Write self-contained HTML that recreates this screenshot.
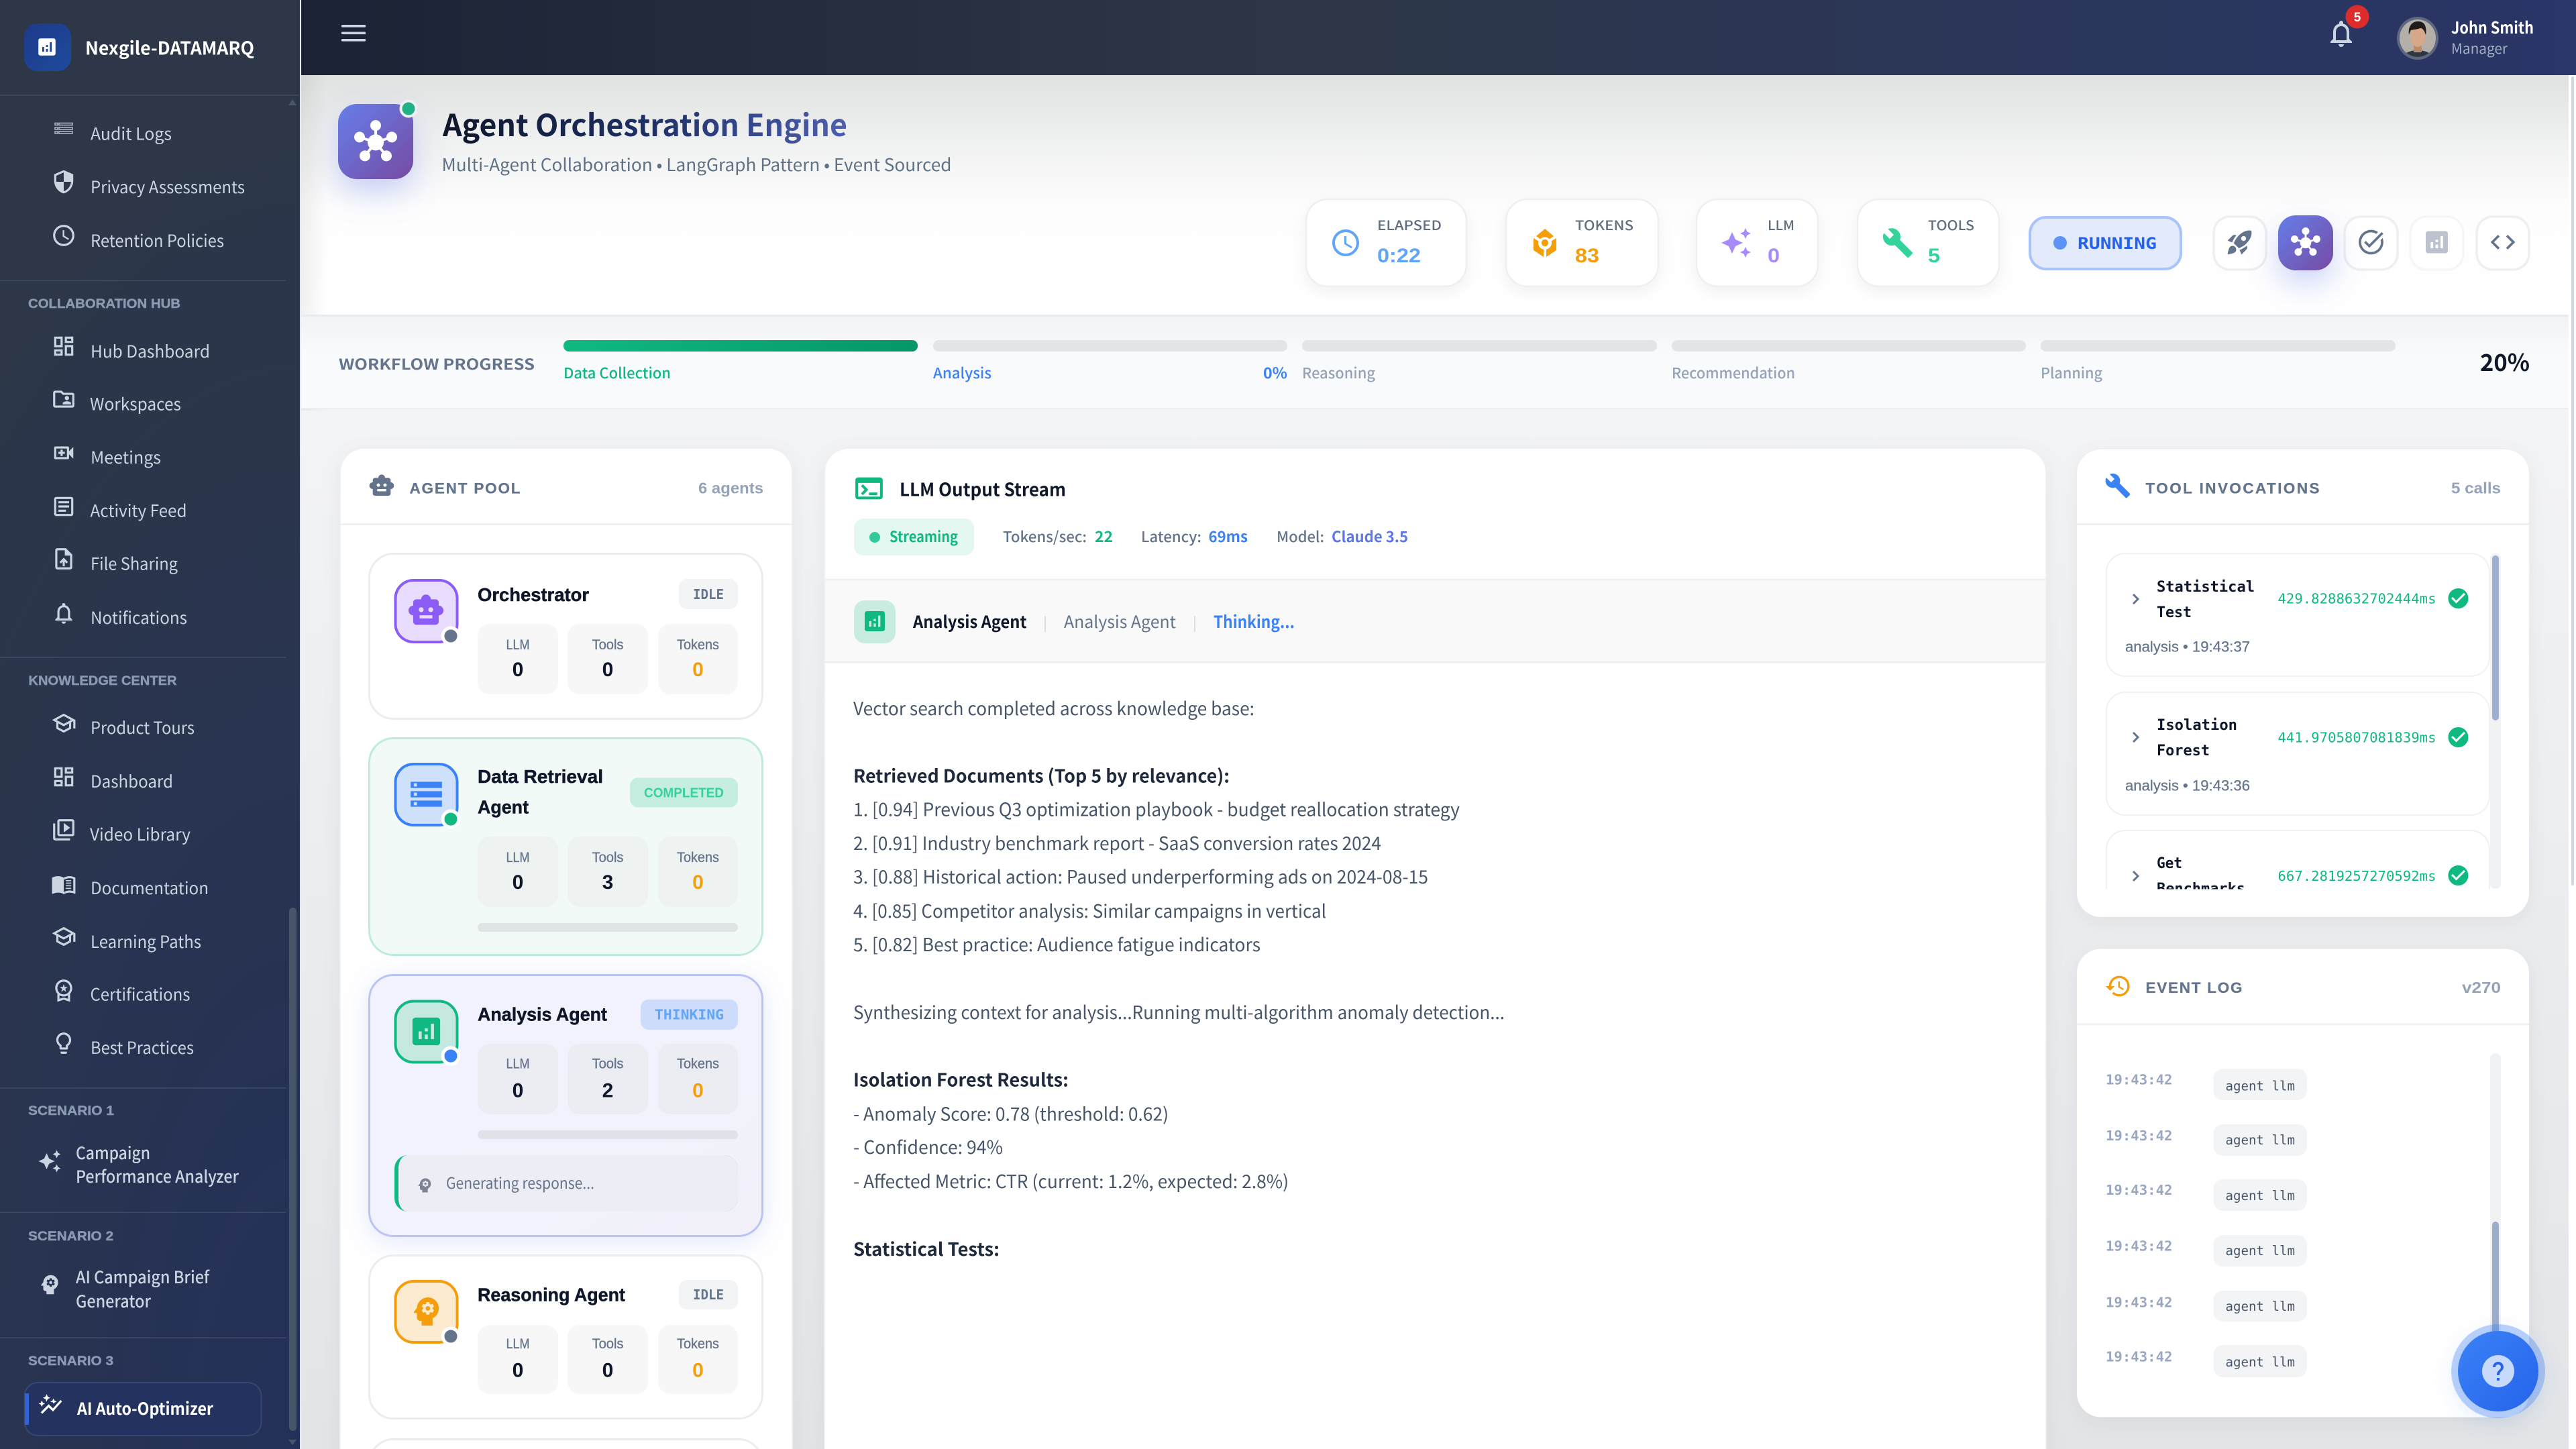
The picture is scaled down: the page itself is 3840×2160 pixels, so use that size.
<!DOCTYPE html>
<html lang="en"><head><meta charset="utf-8"><title>Agent Orchestration Engine</title>
<style>
html,body{margin:0;padding:0;background:#f2f3f5;overflow:hidden}
svg{display:block}
text{font-family:"Noto Sans CJK JP","Liberation Sans",sans-serif;white-space:pre}
.nav{font-size:25px;fill:#cbd5e1}
.sec{font-family:"Liberation Sans",sans-serif;font-weight:700;font-size:19px;fill:#8b9ab3;stroke:#8b9ab3;stroke-width:.4px}
.sc{font-size:25px;font-weight:500;fill:#cbd5e1}
.pl{font-family:"Liberation Sans",sans-serif;font-weight:700;font-size:22.5px;fill:#64748b;stroke:#64748b;stroke-width:.3px}
.pr{font-family:"Liberation Sans",sans-serif;font-weight:700;font-size:23px;fill:#94a3b8}
.nm{font-family:"Liberation Sans",sans-serif;font-weight:700;font-size:28px;fill:#0f172a;stroke:#0f172a;stroke-width:.5px}
.bd{font-family:"DejaVu Sans Mono",monospace;font-weight:700;font-size:20px}
.bs{font-family:"Liberation Sans",sans-serif;font-weight:700;font-size:20px}
.sl{font-family:"Liberation Sans",sans-serif;font-size:21px;fill:#64748b;stroke:#64748b;stroke-width:.3px;text-anchor:middle}
.sv{font-family:"Liberation Sans",sans-serif;font-weight:700;font-size:30px;fill:#0f172a;text-anchor:middle}
.or{fill:#f59e0b}
.b{font-size:27px;fill:#475569}
.bb{font-size:27px;font-weight:700;fill:#1e293b}
.tn{font-family:"DejaVu Sans Mono",monospace;font-weight:700;font-size:22px;fill:#0f172a}
.td{font-family:"DejaVu Sans Mono",monospace;font-size:20.7px;fill:#10b981}
.tm{font-family:"Liberation Sans",sans-serif;font-size:22px;fill:#64748b;stroke:#64748b;stroke-width:.25px}
.et{font-family:"DejaVu Sans Mono",monospace;font-weight:700;font-size:20.7px;fill:#9aa7c0}
.ec{font-family:"DejaVu Sans Mono",monospace;font-size:19.2px;fill:#475569}
.cl{font-size:20px;font-weight:500;fill:#5f6f80}
.cv{font-family:"Liberation Sans",sans-serif;font-weight:700;font-size:30px}
.pg{font-size:22px;font-weight:500;fill:#94a3b8}
.ls{font-size:22px;font-weight:500;fill:#64748b}
.lv{font-size:22px;font-weight:700}
</style></head><body>
<svg xmlns="http://www.w3.org/2000/svg" width="3840" height="2160" viewBox="0 0 3840 2160">
<defs>
<radialGradient id="gSide" gradientUnits="userSpaceOnUse" cx="0" cy="0" r="1" gradientTransform="translate(447 2160) scale(800 2000)"><stop offset="0" stop-color="#243059"/><stop offset="1" stop-color="#2d3748"/></radialGradient>
<linearGradient id="gTop" x1="0" y1="0" x2="1" y2="0"><stop offset="0" stop-color="#1b2235"/><stop offset=".43" stop-color="#2d3746"/><stop offset="1" stop-color="#2a3568"/></linearGradient>
<linearGradient id="gLogo" x1="0" y1="0" x2="1" y2="1"><stop offset="0" stop-color="#1e3a8a"/><stop offset="1" stop-color="#1e4a9c"/></linearGradient>
<linearGradient id="gMain" x1="0" y1="0" x2="0" y2="1"><stop offset="0" stop-color="#f3f4f6"/><stop offset="1" stop-color="#e2e4e7"/></linearGradient>
<linearGradient id="gHead" x1="0" y1="0" x2="0" y2="1"><stop offset="0" stop-color="#e0e1e1"/><stop offset=".25" stop-color="#eeefef"/><stop offset=".55" stop-color="#fdfdfd"/><stop offset="1" stop-color="#ffffff"/></linearGradient>
<linearGradient id="gProg" x1="0" y1="0" x2="0" y2="1"><stop offset="0" stop-color="#f2f3f4"/><stop offset=".4" stop-color="#f9fafb"/><stop offset="1" stop-color="#f9fafc"/></linearGradient>
<linearGradient id="gV" x1="0" y1="0" x2="1" y2="1"><stop offset="0" stop-color="#667eea"/><stop offset="1" stop-color="#764ba2"/></linearGradient>
<linearGradient id="gTitle" gradientUnits="userSpaceOnUse" x1="660" y1="0" x2="1263" y2="0"><stop offset="0" stop-color="#0f172a"/><stop offset=".5" stop-color="#1e2f63"/><stop offset="1" stop-color="#4d5fb0"/></linearGradient>
<linearGradient id="gGreen" x1="0" y1="0" x2="1" y2="0"><stop offset="0" stop-color="#10b981"/><stop offset="1" stop-color="#059669"/></linearGradient>
<linearGradient id="gFab" x1="0" y1="0" x2="1" y2="1"><stop offset="0" stop-color="#3b82f6"/><stop offset="1" stop-color="#2563eb"/></linearGradient>
<linearGradient id="gThink" x1="0" y1="0" x2="1" y2="1"><stop offset="0" stop-color="#f1f3ff"/><stop offset="1" stop-color="#f2f1fa"/></linearGradient>
<linearGradient id="gVig" x1="0" y1="0" x2="1" y2="0"><stop offset="0" stop-color="#000" stop-opacity=".06"/><stop offset="1" stop-color="#000" stop-opacity="0"/></linearGradient>
<filter id="sh" x="-10%" y="-10%" width="120%" height="125%"><feDropShadow dx="0" dy="8" stdDeviation="14" flood-color="#000" flood-opacity=".05"/></filter>
<filter id="shc" x="-20%" y="-20%" width="140%" height="150%"><feDropShadow dx="0" dy="8" stdDeviation="10" flood-color="#000" flood-opacity=".05"/></filter>
<filter id="shV" x="-60%" y="-60%" width="220%" height="240%"><feDropShadow dx="0" dy="20" stdDeviation="22" flood-color="#667eea" flood-opacity=".32"/></filter>
<filter id="shB" x="-20%" y="-20%" width="140%" height="140%"><feDropShadow dx="0" dy="8" stdDeviation="20" flood-color="#667eea" flood-opacity=".18"/></filter>
<filter id="shF" x="-40%" y="-40%" width="180%" height="180%"><feDropShadow dx="0" dy="8" stdDeviation="14" flood-color="#2563eb" flood-opacity=".25"/></filter>
<clipPath id="clipTools"><rect x="3130" y="815" width="600" height="510.5"/></clipPath>
<clipPath id="clipAv"><ellipse cx="3604" cy="57" rx="27" ry="28"/></clipPath>
<symbol id="shield" viewBox="0 0 24 24"><path d="M12 1L3 5v6c0 5.55 3.84 10.74 9 12 5.16-1.26 9-6.45 9-12V5l-9-4zm0 10.99h7c-.53 4.12-3.28 7.79-7 8.94V12H5V6.3l7-3.11v8.8z"/></symbol>
<symbol id="clock" viewBox="0 0 24 24"><path d="M11.99 2C6.47 2 2 6.48 2 12s4.47 10 9.99 10C17.52 22 22 17.52 22 12S17.52 2 11.99 2zM12 20c-4.42 0-8-3.58-8-8s3.58-8 8-8 8 3.58 8 8-3.58 8-8 8zm.5-13H11v6l5.25 3.15.75-1.23-4.5-2.67z"/></symbol>
<symbol id="dash" viewBox="0 0 24 24"><path d="M19 5v2h-4V5h4M9 5v6H5V5h4m10 8v6h-4v-6h4M9 17v2H5v-2h4M21 3h-8v6h8V3zM11 3H3v10h8V3zm10 8h-8v10h8V11zm-10 4H3v6h8v-6z"/></symbol>
<symbol id="folder" viewBox="0 0 24 24"><path d="M20 6h-8l-2-2H4c-1.1 0-2 .9-2 2v12c0 1.1.9 2 2 2h16c1.1 0 2-.9 2-2V8c0-1.1-.9-2-2-2zm0 12H4V6h5.17l2 2H20v10zm-5-5c1.1 0 2-.9 2-2s-.9-2-2-2-2 .9-2 2 .9 2 2 2zm-4 4h8v-1c0-1.33-2.67-2-4-2s-4 .67-4 2v1z"/></symbol>
<symbol id="video" viewBox="0 0 24 24"><path d="M15 8v8H5V8h10m1-2H4c-.55 0-1 .45-1 1v10c0 .55.45 1 1 1h12c.55 0 1-.45 1-1v-3.5l4 4v-11l-4 4V7c0-.55-.45-1-1-1zm-3 5h-2V9H9v2H7v2h2v2h2v-2h2v-2z"/></symbol>
<symbol id="article" viewBox="0 0 24 24"><path d="M19 5v14H5V5h14m0-2H5c-1.1 0-2 .9-2 2v14c0 1.1.9 2 2 2h14c1.1 0 2-.9 2-2V5c0-1.1-.9-2-2-2zM14 17H7v-2h7v2zm3-4H7v-2h10v2zm0-4H7V7h10v2z"/></symbol>
<symbol id="upload" viewBox="0 0 24 24"><path d="M14 2H6c-1.1 0-1.99.9-1.99 2L4 20c0 1.1.89 2 1.99 2H18c1.1 0 2-.9 2-2V8l-6-6zm4 18H6V4h7v5h5v11zM8 15.01l1.41 1.41L11 14.84V19h2v-4.16l1.59 1.59L16 15.01 12.01 11 8 15.01z"/></symbol>
<symbol id="bell" viewBox="0 0 24 24"><path d="M12 22c1.1 0 2-.9 2-2h-4c0 1.1.9 2 2 2zm6-6v-5c0-3.07-1.63-5.64-4.5-6.32V4c0-.83-.67-1.5-1.5-1.5s-1.5.67-1.5 1.5v.68C7.64 5.36 6 7.92 6 11v5l-2 2v1h16v-1l-2-2zm-2 1H8v-6c0-2.48 1.51-4.5 4-4.5s4 2.02 4 4.5v6z"/></symbol>
<symbol id="school" viewBox="0 0 24 24"><path d="M12 3L1 9l4 2.18v6L12 21l7-3.82v-6l2-1.09V17h2V9L12 3zm6.82 6L12 12.72 5.18 9 12 5.28 18.82 9zM17 15.99l-5 2.73-5-2.73v-3.72L12 15l5-2.73v3.72z"/></symbol>
<symbol id="vlib" viewBox="0 0 24 24"><path d="M4 6H2v14c0 1.1.9 2 2 2h14v-2H4V6zm16-4H8c-1.1 0-2 .9-2 2v12c0 1.1.9 2 2 2h12c1.1 0 2-.9 2-2V4c0-1.1-.9-2-2-2zm0 14H8V4h12v12zM12 5.5v9l6-4.5z"/></symbol>
<symbol id="book" viewBox="0 0 24 24"><path d="M21 5c-1.11-.35-2.33-.5-3.5-.5-1.95 0-4.05.4-5.5 1.5-1.45-1.1-3.55-1.5-5.5-1.5S2.45 4.9 1 6v14.65c0 .25.25.5.5.5.1 0 .15-.05.25-.05C3.1 20.45 5.05 20 6.5 20c1.95 0 4.05.4 5.5 1.5 1.35-.85 3.8-1.5 5.5-1.5 1.65 0 3.35.3 4.75 1.05.1.05.15.05.25.05.25 0 .5-.25.5-.5V6c-.6-.45-1.25-.75-2-1zm0 13.5c-1.1-.35-2.3-.5-3.5-.5-1.7 0-4.15.65-5.5 1.5V8c1.35-.85 3.8-1.5 5.5-1.5 1.2 0 2.4.15 3.5.5v11.5zM14 10.5h5v1h-5zM14 13h5v1h-5zM14 15.5h5v1h-5zM14 8.2h5v1h-5z"/></symbol>
<symbol id="prem" viewBox="0 0 24 24"><path d="M9.68 13.69L12 11.93l2.31 1.76-.88-2.85L15.75 9h-2.84L12 6.19 11.09 9H8.25l2.31 1.84-.88 2.85zM20 10c0-4.42-3.58-8-8-8s-8 3.58-8 8c0 2.03.76 3.87 2 5.28V23l6-2 6 2v-7.72c1.24-1.41 2-3.25 2-5.28zm-8-6c3.31 0 6 2.69 6 6s-2.69 6-6 6-6-2.69-6-6 2.69-6 6-6zm0 15l-4 1.02v-3.1c1.18.68 2.54 1.08 4 1.08s2.82-.4 4-1.08v3.1L12 19z"/></symbol>
<symbol id="bulb" viewBox="0 0 24 24"><path d="M9 21c0 .55.45 1 1 1h4c.55 0 1-.45 1-1v-1H9v1zm3-19C8.14 2 5 5.14 5 9c0 2.38 1.19 4.47 3 5.74V17c0 .55.45 1 1 1h6c.55 0 1-.45 1-1v-2.26c1.81-1.27 3-3.36 3-5.74 0-3.86-3.14-7-7-7zm2.85 11.1l-.85.6V16h-4v-2.3l-.85-.6C7.8 12.16 7 10.63 7 9c0-2.76 2.24-5 5-5s5 2.24 5 5c0 1.63-.8 3.16-2.15 4.1z"/></symbol>
<symbol id="spark" viewBox="0 0 24 24"><path d="M19 9l1.25-2.75L23 5l-2.75-1.25L19 1l-1.25 2.75L15 5l2.75 1.25L19 9zm-7.5.5L9 4 6.5 9.5 1 12l5.5 2.5L9 20l2.5-5.5L17 12l-5.5-2.5zM19 15l-1.25 2.75L15 19l2.75 1.25L19 23l1.25-2.75L23 19l-2.75-1.25L19 15z"/></symbol>
<symbol id="psy" viewBox="0 0 24 24"><path d="M13 8.57c-.79 0-1.43.64-1.43 1.43s.64 1.43 1.43 1.43 1.43-.64 1.43-1.43-.64-1.43-1.43-1.43z"/><path d="M13 3C9.25 3 6.2 5.94 6.02 9.64L4.1 12.2c-.25.33 0 .8.4.8H6v3c0 1.1.9 2 2 2h1v3h7v-4.68c2.36-1.12 4-3.53 4-6.32 0-3.87-3.13-7-7-7zm3 7c0 .13-.01.26-.02.39l.83.66c.08.06.1.16.05.25l-.8 1.39c-.05.09-.16.12-.24.09l-.99-.4c-.21.16-.43.29-.67.39L14 13.83c-.01.1-.1.17-.2.17h-1.6c-.1 0-.18-.07-.2-.17l-.15-1.06c-.25-.1-.47-.23-.68-.39l-.99.4c-.09.03-.2 0-.25-.09l-.8-1.39c-.05-.08-.03-.19.05-.25l.84-.66c-.01-.13-.02-.26-.02-.39 0-.13.02-.27.04-.39l-.85-.66c-.08-.06-.1-.16-.05-.26l.8-1.38c.05-.09.15-.12.24-.09l1 .4c.2-.15.43-.29.67-.39L12 6.17c.02-.1.1-.17.2-.17h1.6c.1 0 .18.07.2.17l.15 1.06c.24.1.46.23.67.39l1-.4c.09-.03.2 0 .24.09l.8 1.38c.05.09.03.2-.05.26l-.85.66c.03.12.04.25.04.39z"/></symbol>
<symbol id="graph" viewBox="0 0 24 24"><path d="M14.06 9.94L12 9l2.06-.94L15 6l.94 2.06L18 9l-2.06.94L15 11l-.94-2.06zM4 14l.94-2.06L7 11l-2.06-.94L4 8l-.94 2.06L1 11l2.06.94L4 14zm4.5-5l1.09-2.41L12 5.5 9.59 4.41 8.5 2 7.41 4.41 5 5.5l2.41 1.09L8.5 9zm-4 11.5l6-6.01 4 4L23 8.93l-1.41-1.41-7.09 7.97-4-4L3 19l1.5 1.5z"/></symbol>
<symbol id="hub" viewBox="0 0 24 24"><path d="M8.4 18.2c.38.5.6 1.12.6 1.8 0 1.66-1.34 3-3 3s-3-1.34-3-3 1.34-3 3-3c.44 0 .85.09 1.23.26l1.41-1.77c-.92-1.03-1.29-2.39-1.09-3.69l-2.03-.68c-.54.83-1.46 1.38-2.52 1.38-1.66 0-3-1.34-3-3s1.34-3 3-3 3 1.34 3 3c0 .07 0 .14-.01.21l2.03.68c.64-1.21 1.82-2.09 3.22-2.32V5.91C9.96 5.57 9 4.4 9 3c0-1.66 1.34-3 3-3s3 1.34 3 3c0 1.4-.96 2.57-2.25 2.91v2.16c1.4.23 2.58 1.11 3.22 2.32l2.03-.68c-.01-.07-.01-.14-.01-.21 0-1.66 1.34-3 3-3s3 1.34 3 3-1.34 3-3 3c-1.06 0-1.98-.55-2.52-1.37l-2.03.68c.2 1.29-.16 2.65-1.09 3.69l1.41 1.77c.38-.17.79-.26 1.23-.26 1.66 0 3 1.34 3 3s-1.34 3-3 3-3-1.34-3-3c0-.68.22-1.3.6-1.8l-1.41-1.77c-1.35.75-3.01.76-4.38 0L8.4 18.2z"/></symbol>
<symbol id="bot" viewBox="0 0 24 24"><path d="M20 9V7c0-1.1-.9-2-2-2h-3c0-1.66-1.34-3-3-3S9 3.34 9 5H6c-1.1 0-2 .9-2 2v2c-1.66 0-3 1.34-3 3s1.34 3 3 3v4c0 1.1.9 2 2 2h12c1.1 0 2-.9 2-2v-4c1.66 0 3-1.34 3-3s-1.34-3-3-3zM7.5 11.5C7.5 10.67 8.17 10 9 10s1.5.67 1.5 1.5S9.83 13 9 13s-1.5-.67-1.5-1.5zM16 17H8v-2h8v2zm-1-4c-.83 0-1.5-.67-1.5-1.5S14.17 10 15 10s1.5.67 1.5 1.5S15.83 13 15 13z"/></symbol>
<symbol id="store" viewBox="0 0 24 24"><path d="M2 20h20v-4H2v4zm2-3h2v2H4v-2zM2 4v4h20V4H2zm4 3H4V5h2v2zm-4 7h20v-4H2v4zm2-3h2v2H4v-2z"/></symbol>
<symbol id="ana" viewBox="0 0 24 24"><path d="M19 3H5c-1.1 0-2 .9-2 2v14c0 1.1.9 2 2 2h14c1.1 0 2-.9 2-2V5c0-1.1-.9-2-2-2zM9 17H7v-5h2v5zm4 0h-2v-3h2v3zm0-5h-2v-2h2v2zm4 5h-2V7h2v10z"/></symbol>
<symbol id="build" viewBox="0 0 24 24"><path d="M22.7 19l-9.1-9.1c.9-2.3.4-5-1.5-6.9-2-2-5-2.4-7.4-1.3L9 6 6 9 1.6 4.7C.4 7.1.9 10.1 2.9 12.1c1.9 1.9 4.6 2.4 6.9 1.5l9.1 9.1c.4.4 1 .4 1.4 0l2.3-2.3c.5-.4.5-1.1.1-1.4z"/></symbol>
<symbol id="term" viewBox="0 0 24 24"><path d="M20 4H4c-1.11 0-2 .9-2 2v12c0 1.1.89 2 2 2h16c1.1 0 2-.9 2-2V6c0-1.1-.9-2-2-2zm0 14H4V8h16v10zm-2-1h-6v-2h6v2zM7.5 17l-1.41-1.41L8.67 13l-2.59-2.59L7.5 9l4 4-4 4z"/></symbol>
<symbol id="hist" viewBox="0 0 24 24"><path d="M13 3c-4.97 0-9 4.03-9 9H1l3.89 3.89.07.14L9 12H6c0-3.87 3.13-7 7-7s7 3.13 7 7-3.13 7-7 7c-1.93 0-3.68-.79-4.94-2.06l-1.42 1.42C8.27 19.99 10.51 21 13 21c4.97 0 9-4.03 9-9s-4.03-9-9-9zm-1 5v5l4.28 2.54.72-1.21-3.5-2.08V8H12z"/></symbol>
<symbol id="chk" viewBox="0 0 24 24"><path d="M12 2C6.48 2 2 6.48 2 12s4.48 10 10 10 10-4.48 10-10S17.52 2 12 2zm-2 15l-5-5 1.41-1.41L10 14.17l7.59-7.59L19 8l-9 9z"/></symbol>
<symbol id="rock" viewBox="0 0 24 24"><path d="M9.19 6.35c-2.04 2.29-3.44 5.58-3.57 5.89L2 10.69l4.05-4.05c.47-.47 1.15-.68 1.81-.55l1.33.26zM11.17 17s3.74-1.55 5.89-3.7c5.4-5.4 4.5-9.62 4.21-10.57-.95-.3-5.17-1.19-10.57 4.21C8.55 9.09 7 12.83 7 12.83L11.17 17zm6.48-2.19c-2.29 2.04-5.58 3.44-5.89 3.57L13.31 22l4.05-4.05c.47-.47.68-1.15.55-1.81l-.26-1.33zM9 18c0 .83-.34 1.58-.88 2.12C6.94 21.3 2 22 2 22s.7-4.94 1.88-6.12C4.42 15.34 5.17 15 6 15c1.66 0 3 1.34 3 3zm4-9c0-1.1.9-2 2-2s2 .9 2 2-.9 2-2 2-2-.9-2-2z"/></symbol>
<symbol id="task" viewBox="0 0 24 24"><path d="M22 5.18L10.59 16.6l-4.24-4.24 1.41-1.41 2.83 2.83 10-10L22 5.18zm-2.21 5.04c.13.57.21 1.17.21 1.78 0 4.42-3.58 8-8 8s-8-3.58-8-8 3.58-8 8-8c1.58 0 3.04.46 4.28 1.25l1.44-1.44C16.1 2.67 14.13 2 12 2 6.48 2 2 6.48 2 12s4.48 10 10 10 10-4.48 10-10c0-1.19-.22-2.33-.6-3.39l-1.61 1.61z"/></symbol>
<symbol id="code" viewBox="0 0 24 24"><path d="M9.4 16.6L4.8 12l4.6-4.6L8 6l-6 6 6 6 1.4-1.4zm5.2 0l4.6-4.6-4.6-4.6L16 6l6 6-6 6-1.4-1.4z"/></symbol>
<symbol id="tok" viewBox="0 0 24 24"><path d="M12 1.5L18.5 7l-3 2.2C14.6 8.3 13.4 7.7 12 7.7S9.400 8.300 8.500 9.200L5.500 7z"/><path d="M3.500 8.500l3.700 2.200C7 11.100 7 11.600 7 12c0 2.400 1.700 4.400 4 4.900V22.500l-7.500-5z"/><path d="M20.500 8.500l-3.700 2.200c.2.400.2.900.2 1.300 0 2.400-1.700 4.400-4 4.900V22.500l7.500-5z"/><circle cx="12" cy="12" r="2.600"/></symbol>
</defs>

<!-- main background -->
<rect x="448" y="608" width="3392" height="1552" fill="url(#gMain)"/>
<rect x="448" y="112" width="3392" height="357" fill="url(#gHead)"/>
<rect x="448" y="112" width="40" height="500" fill="url(#gVig)"/>
<rect x="448" y="469" width="3385" height="3" fill="#e9ebf2"/>
<rect x="448" y="472" width="3385" height="136" fill="url(#gProg)"/>
<rect x="448" y="608" width="3385" height="2" fill="#eceef0"/>
<rect x="3829" y="112" width="11" height="2048" fill="#ffffff"/>
<rect x="3833" y="114" width="4" height="1206" rx="2" fill="#cdd7e2"/>

<!-- top bar -->
<rect x="448" y="0" width="3392" height="112" fill="url(#gTop)"/>
<g fill="#cbd5e1"><rect x="509" y="37" width="36" height="3.6" rx="1"/><rect x="509" y="47.500" width="36" height="3.6" rx="1"/><rect x="509" y="58" width="36" height="3.6" rx="1"/></g>
<use href="#bell" x="3466" y="26" width="48" height="48" fill="#cbd5e1"/>
<circle cx="3514" cy="25" r="17.5" fill="#dc2c2c"/>
<text x="3514" y="32" font-size="19" font-weight="700" fill="#fff" text-anchor="middle" style="font-family:'Liberation Sans',sans-serif">5</text>
<ellipse cx="3604" cy="57" rx="31" ry="32" fill="#5d6780"/>
<g clip-path="url(#clipAv)"><rect x="3570" y="25" width="70" height="64" fill="#b4b0a9"/><path d="M3580 92c0-12 11-17 24-17s24 5 24 17z" fill="#2f3842"/><rect x="3598" y="64" width="12" height="14" fill="#b98a6c"/><ellipse cx="3604" cy="54" rx="11" ry="16" fill="#d6a788"/><path d="M3591 52c-2-15 7-21 15-20 8 0 12 8 10 20-2-6-4-10-8-10-5 2-11 2-14 3-1 2-2 3-3 7z" fill="#211c19"/></g>
<text x="3654" y="50" font-size="24" font-weight="700" fill="#fff" textLength="123" lengthAdjust="spacingAndGlyphs">John Smith</text>
<text x="3654" y="80" font-size="21" fill="#a0aec0" textLength="84" lengthAdjust="spacingAndGlyphs">Manager</text>

<!-- sidebar -->
<rect x="0" y="0" width="447" height="2160" fill="url(#gSide)"/>
<rect x="447" y="0" width="2" height="2160" fill="#e6e7e9"/>
<rect x="36" y="35" width="70" height="71" rx="20" fill="url(#gLogo)"/>
<use href="#ana" x="53" y="53" width="34" height="34" fill="#fff"/>
<text x="127" y="81.5" font-size="27" font-weight="700" fill="#fff" textLength="252" lengthAdjust="spacingAndGlyphs">Nexgile-DATAMARQ</text>
<rect x="0" y="141" width="446" height="1.5" fill="#3f4b60"/>
<path d="M430 157l6-9 6 9z" fill="#47566b"/>
<path d="M430 2146l6 8 6-8z" fill="#47566b"/>
<rect x="431" y="1353" width="11" height="780" rx="5.5" fill="#475569"/>
<g fill="none" stroke="#a8b3c3" stroke-width="1.6"><rect x="82" y="183.5" width="4" height="3"/><rect x="82" y="190" width="4" height="3"/><rect x="82" y="196" width="4" height="3"/><rect x="88" y="183.5" width="20" height="3"/><rect x="88" y="190" width="20" height="3"/><rect x="88" y="196" width="20" height="3"/></g>
<g fill="#cbd5e1">
<use href="#shield" x="76" y="252" width="38" height="38"/>
<use href="#clock" x="76" y="332" width="38" height="38"/>
<use href="#dash" x="76" y="497" width="38" height="38"/>
<use href="#folder" x="76" y="576" width="38" height="38"/>
<use href="#video" x="76" y="656" width="38" height="38"/>
<use href="#article" x="76" y="736" width="38" height="38"/>
<use href="#upload" x="76" y="814" width="38" height="38"/>
<use href="#bell" x="76" y="895" width="38" height="38"/>
<use href="#school" x="76" y="1059" width="38" height="38"/>
<use href="#dash" x="76" y="1139" width="38" height="38"/>
<use href="#vlib" x="76" y="1218" width="38" height="38"/>
<use href="#book" x="76" y="1299" width="38" height="38"/>
<use href="#school" x="76" y="1377" width="38" height="38"/>
<use href="#prem" x="76" y="1457" width="38" height="38"/>
<use href="#bulb" x="76" y="1536" width="38" height="38"/>
<use href="#spark" x="56" y="1713" width="36" height="36"/>
<use href="#psy" x="55" y="1896" width="38" height="38"/>
</g>
<text class="nav" x="135" y="208.5" textLength="121" lengthAdjust="spacingAndGlyphs">Audit Logs</text>
<text class="nav" x="135" y="288" textLength="230" lengthAdjust="spacingAndGlyphs">Privacy Assessments</text>
<text class="nav" x="135" y="368" textLength="199" lengthAdjust="spacingAndGlyphs">Retention Policies</text>
<rect x="0" y="417.5" width="426" height="1.5" fill="#3f4b60"/>
<text class="sec" x="42" y="459" textLength="227" lengthAdjust="spacingAndGlyphs">COLLABORATION HUB</text>
<text class="nav" x="135" y="533" textLength="178" lengthAdjust="spacingAndGlyphs">Hub Dashboard</text>
<text class="nav" x="134" y="611.5" textLength="136" lengthAdjust="spacingAndGlyphs">Workspaces</text>
<text class="nav" x="135" y="691" textLength="105" lengthAdjust="spacingAndGlyphs">Meetings</text>
<text class="nav" x="134.5" y="770.5" textLength="144" lengthAdjust="spacingAndGlyphs">Activity Feed</text>
<text class="nav" x="135" y="849.5" textLength="130" lengthAdjust="spacingAndGlyphs">File Sharing</text>
<text class="nav" x="135" y="930" textLength="144" lengthAdjust="spacingAndGlyphs">Notifications</text>
<rect x="0" y="979" width="426" height="1.5" fill="#3f4d66"/>
<text class="sec" x="42.5" y="1021" textLength="221" lengthAdjust="spacingAndGlyphs">KNOWLEDGE CENTER</text>
<text class="nav" x="135" y="1094" textLength="155" lengthAdjust="spacingAndGlyphs">Product Tours</text>
<text class="nav" x="135" y="1174" textLength="123" lengthAdjust="spacingAndGlyphs">Dashboard</text>
<text class="nav" x="134" y="1253" textLength="150" lengthAdjust="spacingAndGlyphs">Video Library</text>
<text class="nav" x="135" y="1333" textLength="176" lengthAdjust="spacingAndGlyphs">Documentation</text>
<text class="nav" x="135" y="1413" textLength="165" lengthAdjust="spacingAndGlyphs">Learning Paths</text>
<text class="nav" x="134.5" y="1491.5" textLength="149" lengthAdjust="spacingAndGlyphs">Certifications</text>
<text class="nav" x="135" y="1571" textLength="154" lengthAdjust="spacingAndGlyphs">Best Practices</text>
<rect x="0" y="1621" width="426" height="1.5" fill="#3c4866"/>
<text class="sec" x="42" y="1662" textLength="128" lengthAdjust="spacingAndGlyphs">SCENARIO 1</text>
<text class="sc" x="113" y="1728" textLength="111" lengthAdjust="spacingAndGlyphs">Campaign</text>
<text class="sc" x="113" y="1763" textLength="243" lengthAdjust="spacingAndGlyphs">Performance Analyzer</text>
<rect x="0" y="1806.5" width="426" height="1.5" fill="#3c4866"/>
<text class="sec" x="42" y="1849" textLength="127" lengthAdjust="spacingAndGlyphs">SCENARIO 2</text>
<text class="sc" x="113" y="1913" textLength="199" lengthAdjust="spacingAndGlyphs">AI Campaign Brief</text>
<text class="sc" x="113" y="1949" textLength="112" lengthAdjust="spacingAndGlyphs">Generator</text>
<rect x="0" y="1993.5" width="426" height="1.5" fill="#3c4866"/>
<text class="sec" x="42" y="2035" textLength="127" lengthAdjust="spacingAndGlyphs">SCENARIO 3</text>
<rect x="36.5" y="2061" width="353" height="79" rx="20" fill="#24325f" stroke="#364670" stroke-width="2"/>
<path d="M37 2077h6v47h-6z" fill="#2f63d6"/>
<use href="#graph" x="56" y="2075" width="38" height="38" fill="#fff"/>
<text x="115" y="2109" font-size="25" font-weight="700" fill="#fff" textLength="203" lengthAdjust="spacingAndGlyphs">AI Auto-Optimizer</text>

<!-- page header -->
<rect x="504" y="155" width="112" height="112" rx="28" fill="url(#gV)" filter="url(#shV)"/>
<use href="#hub" x="528" y="179" width="64" height="64" fill="#fff"/>
<circle cx="609" cy="162" r="11.5" fill="#21b287" stroke="#eef0f3" stroke-width="4"/>
<text x="660" y="203" font-size="45" font-weight="700" fill="url(#gTitle)" textLength="603" lengthAdjust="spacingAndGlyphs">Agent Orchestration Engine</text>
<text x="658.5" y="255" font-size="26" fill="#5f7185" textLength="760" lengthAdjust="spacingAndGlyphs">Multi-Agent Collaboration • LangGraph Pattern • Event Sourced</text>

<!-- stat cards -->
<g fill="#fff" stroke="#eeeff1" stroke-width="2.5" filter="url(#shc)">
<rect x="1947" y="297" width="239" height="130" rx="32"/>
<rect x="2245" y="297" width="227" height="130" rx="32"/>
<rect x="2529" y="297" width="181" height="130" rx="32"/>
<rect x="2769" y="297" width="211" height="130" rx="32"/>
</g>
<use href="#clock" x="1982" y="338" width="48" height="48" fill="#60a5fa"/>
<use href="#tok" x="2279" y="338" width="48" height="48" fill="#f59e0b"/>
<use href="#spark" x="2564" y="338" width="48" height="48" fill="#a78bfa"/>
<use href="#build" x="2805" y="338" width="48" height="48" fill="#34d399"/>
<text class="cl" x="2053" y="343" textLength="96" lengthAdjust="spacingAndGlyphs">ELAPSED</text>
<text class="cl" x="2348" y="343" textLength="87" lengthAdjust="spacingAndGlyphs">TOKENS</text>
<text class="cl" x="2635" y="343" textLength="40" lengthAdjust="spacingAndGlyphs">LLM</text>
<text class="cl" x="2874" y="343" textLength="69" lengthAdjust="spacingAndGlyphs">TOOLS</text>
<text class="cv" x="2053" y="391" fill="#60a5fa" textLength="65" lengthAdjust="spacingAndGlyphs">0:22</text>
<text class="cv" x="2348" y="391" fill="#f59e0b" textLength="36" lengthAdjust="spacingAndGlyphs">83</text>
<text class="cv" x="2635" y="391" fill="#a78bfa" textLength="18" lengthAdjust="spacingAndGlyphs">0</text>
<text class="cv" x="2874" y="391" fill="#34d399" textLength="18" lengthAdjust="spacingAndGlyphs">5</text>
<rect x="3026" y="324" width="225" height="77" rx="24" fill="#e2eafc" stroke="#a9c4fb" stroke-width="4"/>
<circle cx="3071" cy="362" r="10" fill="#5b93f6"/>
<text x="3097" y="371" font-size="24" font-weight="700" fill="#2563eb" style="font-family:'DejaVu Sans Mono',monospace" textLength="118" lengthAdjust="spacingAndGlyphs">RUNNING</text>
<g fill="#fff" stroke="#eeeff0" stroke-width="3.5">
<rect x="3300" y="323" width="78" height="79" rx="24"/>
<rect x="3495" y="323" width="79" height="79" rx="24"/>
<rect x="3593" y="323" width="79" height="79" rx="24" stroke="#f6f6f7"/>
<rect x="3692" y="323" width="78" height="79" rx="24"/>
</g>
<rect x="3396" y="321" width="82" height="82" rx="26" fill="url(#gV)" filter="url(#shV)"/>
<use href="#rock" x="3317" y="339" width="44" height="44" fill="#64748b"/>
<use href="#hub" x="3415" y="339" width="44" height="44" fill="#fff"/>
<use href="#task" x="3512.5" y="339" width="44" height="44" fill="#64748b"/>
<use href="#ana" x="3610.5" y="339" width="44" height="44" fill="#bcc3ce"/>
<use href="#code" x="3709" y="339" width="44" height="44" fill="#64748b"/>

<!-- workflow -->
<text x="505" y="551" font-size="22" font-weight="700" fill="#64748b" textLength="292" lengthAdjust="spacingAndGlyphs">WORKFLOW PROGRESS</text>
<rect x="840" y="507" width="528" height="17" rx="8" fill="url(#gGreen)"/>
<g fill="#e4e5e6"><rect x="1391" y="507" width="528" height="17" rx="8"/><rect x="1941" y="507" width="529" height="17" rx="8"/><rect x="2492" y="507" width="528" height="17" rx="8"/><rect x="3042" y="507" width="529" height="17" rx="8"/></g>
<text x="840" y="564" font-size="22" font-weight="500" fill="#10b981" textLength="160" lengthAdjust="spacingAndGlyphs">Data Collection</text>
<text x="1391" y="564" font-size="22" font-weight="500" fill="#3b82f6" textLength="87" lengthAdjust="spacingAndGlyphs">Analysis</text>
<text x="1883" y="564" font-size="22" font-weight="700" fill="#3b82f6" textLength="36" lengthAdjust="spacingAndGlyphs">0%</text>
<text class="pg" x="1941" y="564" textLength="109" lengthAdjust="spacingAndGlyphs">Reasoning</text>
<text class="pg" x="2492" y="564" textLength="184" lengthAdjust="spacingAndGlyphs">Recommendation</text>
<text class="pg" x="3042" y="564" textLength="92" lengthAdjust="spacingAndGlyphs">Planning</text>
<text x="3697" y="553" font-size="35" font-weight="700" fill="#0f172a" textLength="74" lengthAdjust="spacingAndGlyphs">20%</text>

<!-- agent pool -->
<rect x="507" y="668" width="674" height="1560" rx="36" fill="#fff" stroke="#eff0f2" stroke-width="2" filter="url(#sh)"/>
<use href="#bot" x="549" y="704" width="40" height="40" fill="#64748b"/>
<text class="pl" x="610.5" y="735.5" textLength="165" lengthAdjust="spacing">AGENT POOL</text>
<text class="pr" x="1041" y="735.5" textLength="97" lengthAdjust="spacingAndGlyphs">6 agents</text>
<rect x="508" y="780" width="672" height="3" fill="#f0f1f3"/>

<!-- card 1 -->
<rect x="550.5" y="825.5" width="586" height="246" rx="36" fill="#fff" stroke="#ecedef" stroke-width="3"/>
<rect x="589.5" y="865" width="92" height="92" rx="27" fill="#e8dcff" stroke="#8b5cf6" stroke-width="4"/>
<use href="#bot" x="606.5" y="881.5" width="57" height="57" fill="#8b5cf6"/>
<circle cx="672" cy="948" r="12" fill="#64748b" stroke="#fff" stroke-width="5"/>
<text class="nm" x="712" y="896" textLength="166" lengthAdjust="spacingAndGlyphs">Orchestrator</text>
<rect x="1012" y="863" width="88" height="45" rx="12" fill="#f3f4f6"/>
<text class="bd" x="1033" y="893" fill="#64748b" textLength="46" lengthAdjust="spacingAndGlyphs">IDLE</text>
<g fill="#f7f7f8"><rect x="712" y="930" width="120" height="105" rx="18"/><rect x="846" y="930" width="120" height="105" rx="18"/><rect x="981" y="930" width="119" height="105" rx="18"/></g>
<text class="sl" x="772" y="968" textLength="35" lengthAdjust="spacingAndGlyphs">LLM</text><text class="sl" x="906" y="968" textLength="47" lengthAdjust="spacingAndGlyphs">Tools</text><text class="sl" x="1040.5" y="968" textLength="63" lengthAdjust="spacingAndGlyphs">Tokens</text>
<text class="sv" x="772" y="1008">0</text><text class="sv" x="906" y="1008">0</text><text class="sv or" x="1040.5" y="1008">0</text>

<!-- card 2 -->
<rect x="550.5" y="1100.5" width="586" height="323" rx="36" fill="#f1faf7" stroke="#bdecdc" stroke-width="3"/>
<rect x="589.5" y="1139" width="92" height="91" rx="27" fill="#cfe1fa" stroke="#3b82f6" stroke-width="4"/>
<use href="#store" x="607.5" y="1156" width="56" height="56" fill="#3b82f6"/>
<circle cx="672" cy="1221" r="12" fill="#10b981" stroke="#fff" stroke-width="5"/>
<text class="nm" x="712" y="1167" textLength="187" lengthAdjust="spacingAndGlyphs">Data Retrieval</text>
<text class="nm" x="712" y="1212.5" textLength="76" lengthAdjust="spacingAndGlyphs">Agent</text>
<rect x="939" y="1159.5" width="161" height="44" rx="12" fill="#c5eee0"/>
<text class="bs" x="960" y="1188.5" fill="#34d399" textLength="119" lengthAdjust="spacingAndGlyphs">COMPLETED</text>
<g fill="#eef3f1"><rect x="712" y="1247" width="120" height="105" rx="18"/><rect x="846" y="1247" width="120" height="105" rx="18"/><rect x="981" y="1247" width="119" height="105" rx="18"/></g>
<text class="sl" x="772" y="1285" textLength="35" lengthAdjust="spacingAndGlyphs">LLM</text><text class="sl" x="906" y="1285" textLength="47" lengthAdjust="spacingAndGlyphs">Tools</text><text class="sl" x="1040.5" y="1285" textLength="63" lengthAdjust="spacingAndGlyphs">Tokens</text>
<text class="sv" x="772" y="1325">0</text><text class="sv" x="906" y="1325">3</text><text class="sv or" x="1040.5" y="1325">0</text>
<rect x="712" y="1376" width="388" height="13" rx="6.5" fill="#e1e4e5"/>

<!-- card 3 -->
<rect x="550.5" y="1453.5" width="586" height="389" rx="36" fill="url(#gThink)" stroke="#b9c3f6" stroke-width="3" filter="url(#shB)"/>
<rect x="589.5" y="1492.5" width="92" height="91" rx="27" fill="#c5e8e1" stroke="#10b981" stroke-width="4"/>
<use href="#ana" x="608" y="1510" width="55" height="55" fill="#10b981"/>
<circle cx="672" cy="1574" r="12" fill="#3b82f6" stroke="#fff" stroke-width="5"/>
<text class="nm" x="712" y="1521.5" textLength="193" lengthAdjust="spacingAndGlyphs">Analysis Agent</text>
<rect x="955" y="1490" width="145" height="45" rx="12" fill="#cddcfb"/>
<text class="bd" x="976" y="1519.5" fill="#60a5fa" textLength="103" lengthAdjust="spacingAndGlyphs">THINKING</text>
<g fill="#ecedf3"><rect x="712" y="1556" width="120" height="105" rx="18"/><rect x="846" y="1556" width="120" height="105" rx="18"/><rect x="981" y="1556" width="119" height="105" rx="18"/></g>
<text class="sl" x="772" y="1592.5" textLength="35" lengthAdjust="spacingAndGlyphs">LLM</text><text class="sl" x="906" y="1592.5" textLength="47" lengthAdjust="spacingAndGlyphs">Tools</text><text class="sl" x="1040.5" y="1592.5" textLength="63" lengthAdjust="spacingAndGlyphs">Tokens</text>
<text class="sv" x="772" y="1635.5">0</text><text class="sv" x="906" y="1635.5">2</text><text class="sv or" x="1040.5" y="1635.5">0</text>
<rect x="712" y="1685" width="388" height="13" rx="6.5" fill="#e0e1e9"/>
<rect x="588" y="1722" width="512" height="84" rx="20" fill="#10b981"/>
<path d="M608 1722h472a20 20 0 0 1 20 20v44a20 20 0 0 1-20 20H608c-8 0-14-8-14-20v-44c0-12 6-20 14-20z" fill="#ecedf5"/>
<use href="#psy" x="619" y="1753" width="28" height="28" fill="#7b8494"/>
<text x="665" y="1772" font-size="23" fill="#64748b" textLength="221" lengthAdjust="spacingAndGlyphs">Generating response...</text>

<!-- card 4 -->
<rect x="550.5" y="1871.5" width="586" height="243" rx="36" fill="#fff" stroke="#ecedef" stroke-width="3"/>
<rect x="589.5" y="1910" width="92" height="91" rx="27" fill="#fdebcf" stroke="#f59e0b" stroke-width="4"/>
<use href="#psy" x="607.5" y="1927" width="56" height="56" fill="#f59e0b"/>
<circle cx="672" cy="1992" r="12" fill="#64748b" stroke="#fff" stroke-width="5"/>
<text class="nm" x="712" y="1939.5" textLength="220" lengthAdjust="spacingAndGlyphs">Reasoning Agent</text>
<rect x="1012" y="1908" width="88" height="44" rx="12" fill="#f3f4f6"/>
<text class="bd" x="1033" y="1937" fill="#64748b" textLength="46" lengthAdjust="spacingAndGlyphs">IDLE</text>
<g fill="#f7f7f8"><rect x="712" y="1975" width="120" height="103" rx="18"/><rect x="846" y="1975" width="120" height="103" rx="18"/><rect x="981" y="1975" width="119" height="103" rx="18"/></g>
<text class="sl" x="772" y="2010" textLength="35" lengthAdjust="spacingAndGlyphs">LLM</text><text class="sl" x="906" y="2010" textLength="47" lengthAdjust="spacingAndGlyphs">Tools</text><text class="sl" x="1040.5" y="2010" textLength="63" lengthAdjust="spacingAndGlyphs">Tokens</text>
<text class="sv" x="772" y="2052.5">0</text><text class="sv" x="906" y="2052.5">0</text><text class="sv or" x="1040.5" y="2052.5">0</text>
<!-- card 5 top -->
<rect x="550.5" y="2145.5" width="586" height="100" rx="36" fill="#fff" stroke="#ecedef" stroke-width="3"/>

<!-- LLM panel -->
<rect x="1229" y="668" width="1821" height="1560" rx="36" fill="#fff" stroke="#eff0f2" stroke-width="2" filter="url(#sh)"/>
<use href="#term" x="1271" y="703.5" width="49" height="49" fill="#10b981"/>
<text x="1341" y="739.5" font-size="27" font-weight="700" fill="#0f172a" textLength="248" lengthAdjust="spacingAndGlyphs">LLM Output Stream</text>
<rect x="1273" y="773" width="179" height="55" rx="14" fill="#e5f7f1"/>
<circle cx="1304" cy="801" r="8" fill="#34c99a"/>
<text class="lv" x="1326" y="808" fill="#10b981" textLength="102" lengthAdjust="spacingAndGlyphs">Streaming</text>
<text class="ls" x="1495" y="808" textLength="125" lengthAdjust="spacingAndGlyphs">Tokens/sec:</text>
<text class="lv" x="1632" y="808" fill="#10b981" textLength="27" lengthAdjust="spacingAndGlyphs">22</text>
<text class="ls" x="1701" y="808" textLength="90" lengthAdjust="spacingAndGlyphs">Latency:</text>
<text class="lv" x="1801.5" y="808" fill="#3b82f6" textLength="58.5" lengthAdjust="spacingAndGlyphs">69ms</text>
<text class="ls" x="1903" y="808" textLength="71" lengthAdjust="spacingAndGlyphs">Model:</text>
<text class="lv" x="1985" y="808" fill="#5b78e6" textLength="114" lengthAdjust="spacingAndGlyphs">Claude 3.5</text>
<rect x="1230" y="864" width="1819" height="123" fill="#f9f9fa"/>
<rect x="1230" y="862.5" width="1819" height="3" fill="#f0f1f2"/>
<rect x="1230" y="985.5" width="1819" height="3" fill="#eff0f1"/>
<rect x="1273" y="895" width="62" height="64" rx="16" fill="#c9ece0"/>
<use href="#ana" x="1284" y="906" width="40" height="40" fill="#10b981"/>
<text x="1361" y="936" font-size="25" font-weight="700" fill="#0f172a" textLength="169.5" lengthAdjust="spacingAndGlyphs">Analysis Agent</text>
<rect x="1557" y="918" width="2" height="24" fill="#d9dee5"/>
<text x="1586" y="936" font-size="25" fill="#64748b" textLength="167" lengthAdjust="spacingAndGlyphs">Analysis Agent</text>
<rect x="1780" y="918" width="2" height="24" fill="#d9dee5"/>
<text x="1809" y="936" font-size="25" font-weight="700" fill="#3b82f6" textLength="121" lengthAdjust="spacingAndGlyphs">Thinking...</text>

<text class="b" x="1272" y="1066" textLength="598" lengthAdjust="spacingAndGlyphs">Vector search completed across knowledge base:</text>
<text class="bb" x="1272" y="1166.5" textLength="561" lengthAdjust="spacingAndGlyphs">Retrieved Documents (Top 5 by relevance):</text>
<text class="b" x="1272" y="1216.5" textLength="904" lengthAdjust="spacingAndGlyphs">1. [0.94] Previous Q3 optimization playbook - budget reallocation strategy</text>
<text class="b" x="1272" y="1267" textLength="787" lengthAdjust="spacingAndGlyphs">2. [0.91] Industry benchmark report - SaaS conversion rates 2024</text>
<text class="b" x="1272" y="1317" textLength="857" lengthAdjust="spacingAndGlyphs">3. [0.88] Historical action: Paused underperforming ads on 2024-08-15</text>
<text class="b" x="1272" y="1368" textLength="705" lengthAdjust="spacingAndGlyphs">4. [0.85] Competitor analysis: Similar campaigns in vertical</text>
<text class="b" x="1272" y="1418" textLength="607" lengthAdjust="spacingAndGlyphs">5. [0.82] Best practice: Audience fatigue indicators</text>
<text class="b" x="1272" y="1519" textLength="971" lengthAdjust="spacingAndGlyphs">Synthesizing context for analysis...Running multi-algorithm anomaly detection...</text>
<text class="bb" x="1272" y="1619.5" textLength="321" lengthAdjust="spacingAndGlyphs">Isolation Forest Results:</text>
<text class="b" x="1272" y="1670.5" textLength="470" lengthAdjust="spacingAndGlyphs">- Anomaly Score: 0.78 (threshold: 0.62)</text>
<text class="b" x="1272" y="1720" textLength="223" lengthAdjust="spacingAndGlyphs">- Confidence: 94%</text>
<text class="b" x="1272" y="1771" textLength="649" lengthAdjust="spacingAndGlyphs">- Affected Metric: CTR (current: 1.2%, expected: 2.8%)</text>
<text class="bb" x="1272" y="1872" textLength="218" lengthAdjust="spacingAndGlyphs">Statistical Tests:</text>

<!-- tool panel -->
<rect x="3096" y="670" width="674" height="697" rx="36" fill="#fff" filter="url(#sh)"/>
<use href="#build" x="3137" y="704" width="40" height="40" fill="#3b82f6"/>
<text class="pl" x="3198.5" y="735.5" textLength="259" lengthAdjust="spacing">TOOL INVOCATIONS</text>
<text class="pr" x="3654" y="735.5" textLength="74" lengthAdjust="spacingAndGlyphs">5 calls</text>
<rect x="3096" y="780" width="674" height="3" fill="#f0f1f3"/>
<rect x="3712" y="825" width="16" height="500" rx="8" fill="#f1f2f3"/>
<rect x="3715" y="828" width="10" height="246" rx="5" fill="#a0aed0"/>
<g clip-path="url(#clipTools)">
<g fill="#fff" stroke="#f0f1f3" stroke-width="2"><rect x="3140" y="825" width="571" height="183" rx="28"/><rect x="3140" y="1032" width="571" height="183" rx="28"/><rect x="3140" y="1238" width="571" height="183" rx="28"/></g>
<g fill="none" stroke="#64748b" stroke-width="3"><path d="M3180 886l7 7-7 7"/><path d="M3180 1092l7 7-7 7"/><path d="M3180 1299l7 7-7 7"/></g>
<text class="tn" x="3215" y="882" textLength="146" lengthAdjust="spacingAndGlyphs">Statistical</text>
<text class="tn" x="3215" y="920" textLength="52" lengthAdjust="spacingAndGlyphs">Test</text>
<text class="tn" x="3215" y="1088" textLength="120" lengthAdjust="spacingAndGlyphs">Isolation</text>
<text class="tn" x="3215" y="1126" textLength="79" lengthAdjust="spacingAndGlyphs">Forest</text>
<text class="tn" x="3215" y="1294" textLength="38" lengthAdjust="spacingAndGlyphs">Get</text>
<text class="tn" x="3215" y="1332" textLength="132" lengthAdjust="spacingAndGlyphs">Benchmarks</text>
<text class="td" x="3395.5" y="899.5" textLength="236" lengthAdjust="spacingAndGlyphs">429.8288632702444ms</text>
<text class="td" x="3395.5" y="1106.5" textLength="236" lengthAdjust="spacingAndGlyphs">441.9705807081839ms</text>
<text class="td" x="3395.5" y="1313" textLength="236" lengthAdjust="spacingAndGlyphs">667.2819257270592ms</text>
<use href="#chk" x="3646.5" y="874" width="36" height="36" fill="#10b981"/>
<use href="#chk" x="3646.5" y="1081" width="36" height="36" fill="#10b981"/>
<use href="#chk" x="3646.5" y="1287" width="36" height="36" fill="#10b981"/>
<text class="tm" x="3168" y="971.5" textLength="186" lengthAdjust="spacingAndGlyphs">analysis • 19:43:37</text>
<text class="tm" x="3168" y="1178.5" textLength="186" lengthAdjust="spacingAndGlyphs">analysis • 19:43:36</text>
</g>

<!-- event panel -->
<rect x="3096" y="1414.5" width="674" height="698" rx="36" fill="#fff" filter="url(#sh)"/>
<use href="#hist" x="3137" y="1449.5" width="41" height="41" fill="#f59e0b"/>
<text class="pl" x="3198.5" y="1480" textLength="144" lengthAdjust="spacing">EVENT LOG</text>
<text class="pr" x="3670" y="1480" textLength="58" lengthAdjust="spacingAndGlyphs">v270</text>
<rect x="3096" y="1525.5" width="674" height="3" fill="#f0f1f3"/>
<rect x="3712" y="1570" width="16" height="500" rx="8" fill="#f1f2f3"/>
<rect x="3715" y="1821" width="10" height="240" rx="5" fill="#9eadcb"/>
<g fill="#f3f4f6"><rect x="3299.5" y="1593" width="139.5" height="47" rx="14"/><rect x="3299.5" y="1676" width="139.5" height="47" rx="14"/><rect x="3299.5" y="1758" width="139.5" height="47" rx="14"/><rect x="3299.5" y="1841" width="139.5" height="47" rx="14"/><rect x="3299.5" y="1924" width="139.5" height="46" rx="14"/><rect x="3299.5" y="2005" width="139.5" height="48" rx="14"/></g>
<text class="et" x="3139" y="1616.5" textLength="99.5" lengthAdjust="spacingAndGlyphs">19:43:42</text>
<text class="et" x="3139" y="1700" textLength="99.5" lengthAdjust="spacingAndGlyphs">19:43:42</text>
<text class="et" x="3139" y="1781" textLength="99.5" lengthAdjust="spacingAndGlyphs">19:43:42</text>
<text class="et" x="3139" y="1864.5" textLength="99.5" lengthAdjust="spacingAndGlyphs">19:43:42</text>
<text class="et" x="3139" y="1948.5" textLength="99.5" lengthAdjust="spacingAndGlyphs">19:43:42</text>
<text class="et" x="3139" y="2029.5" textLength="99.5" lengthAdjust="spacingAndGlyphs">19:43:42</text>
<text class="ec" x="3317.5" y="1625.5" textLength="103.5" lengthAdjust="spacingAndGlyphs">agent llm</text>
<text class="ec" x="3317.5" y="1706" textLength="103.5" lengthAdjust="spacingAndGlyphs">agent llm</text>
<text class="ec" x="3317.5" y="1789" textLength="103.5" lengthAdjust="spacingAndGlyphs">agent llm</text>
<text class="ec" x="3317.5" y="1871" textLength="103.5" lengthAdjust="spacingAndGlyphs">agent llm</text>
<text class="ec" x="3317.5" y="1954" textLength="103.5" lengthAdjust="spacingAndGlyphs">agent llm</text>
<text class="ec" x="3317.5" y="2037" textLength="103.5" lengthAdjust="spacingAndGlyphs">agent llm</text>

<!-- FAB -->
<circle cx="3724" cy="2044" r="70" fill="#3b82f6" fill-opacity=".35" filter="url(#shF)"/>
<circle cx="3724" cy="2044" r="60" fill="url(#gFab)"/>
<circle cx="3724" cy="2044" r="24" fill="#c7dafc"/>
<path transform="translate(3700 2020) scale(2)" d="M13 19h-2v-2h2v2zm2.07-7.75l-.9.92C13.45 12.9 13 13.5 13 15h-2v-.5c0-1.1.45-2.1 1.17-2.83l1.24-1.26c.37-.36.59-.86.59-1.41 0-1.1-.9-2-2-2s-2 .9-2 2H8c0-2.21 1.79-4 4-4s4 1.79 4 4c0 .88-.36 1.68-.93 2.25z" fill="#2563eb"/>
</svg>
</body></html>
